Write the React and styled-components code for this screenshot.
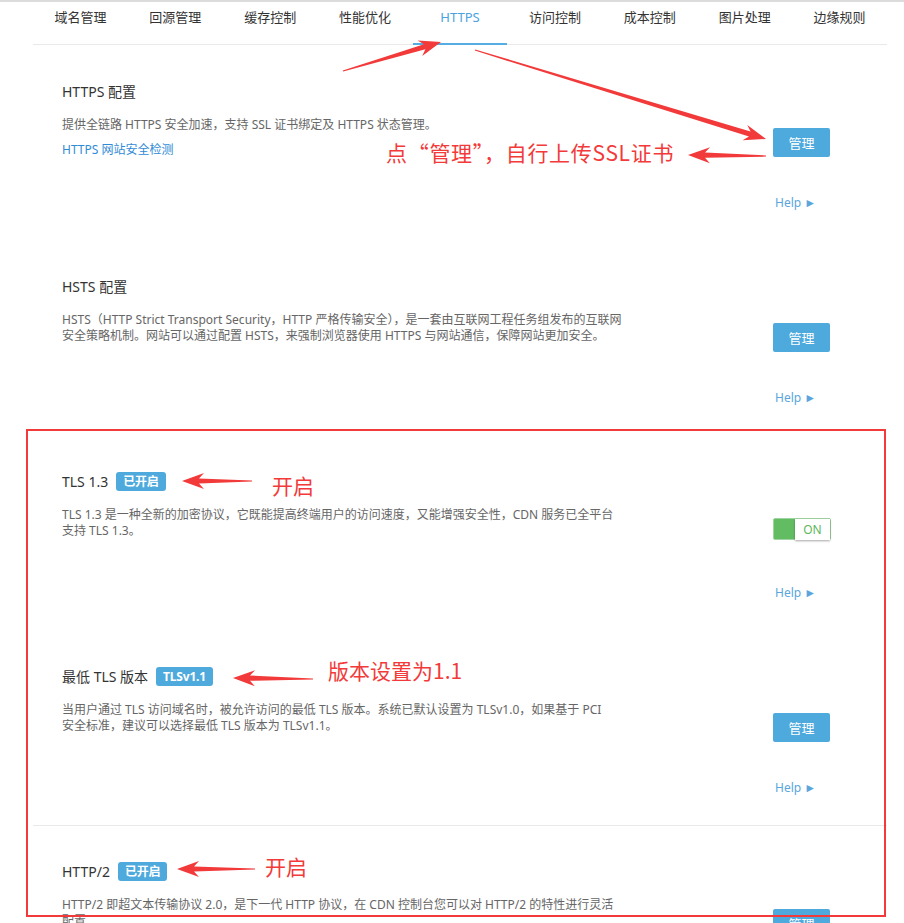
import React from 'react';
import styled, { createGlobalStyle } from 'styled-components';

const GlobalStyle = createGlobalStyle`
  html, body {
    margin: 0;
    padding: 0;
    background: #fff;
    overflow: hidden;
  }
  body {
    font-family: "Noto Sans", "Noto Sans CJK SC", sans-serif;
    color: #333;
  }
`;

const Screen = styled.div`
  position: relative;
  width: 904px;
  height: 923px;
  overflow: hidden;
  border-top: 2px solid #dcdcdc;
  box-sizing: border-box;
`;

const Page = styled.div`
  margin: 0 17px 0 33px;
`;

const Nav = styled.div`
  display: flex;
  height: 43px;
  box-sizing: border-box;
  border-bottom: 1px solid #e9e9e9;
`;

const Tab = styled.div`
  flex: 1;
  height: 43px;
  box-sizing: border-box;
  padding-top: 5px;
  margin-bottom: -1px;
  text-align: center;
  font-size: 13px;
  line-height: 20px;
  color: ${(p) => (p.$active ? '#4aa3df' : '#333')};
  border-bottom: 2px solid ${(p) => (p.$active ? '#56ade3' : 'transparent')};
`;

const Section = styled.div`
  display: flex;
  height: 195px;
  box-sizing: border-box;
  padding: 0 57px 0 29px;
  border-top: ${(p) => (p.$divided ? '1px solid #e9e9e9' : 'none')};
`;

const Info = styled.div`
  flex: 1;
  padding-top: ${(p) => (p.$divided ? '35px' : '36px')};
`;

const Title = styled.div`
  display: flex;
  align-items: center;
  gap: 8px;
  height: 20px;
  font-size: 14px;
  color: #333;
`;

const Badge = styled.span`
  display: inline-flex;
  align-items: center;
  height: 19px;
  padding: 0 7px;
  border-radius: 3px;
  background: #4ea9dc;
  color: #fff;
  font-size: 12px;
  font-weight: 700;
  letter-spacing: -0.2px;
`;

const Desc = styled.p`
  margin: 16px 0 0;
  font-size: 12px;
  line-height: 16px;
  color: #666;
`;

const DocLink = styled.a`
  display: block;
  margin-top: 9px;
  font-size: 12px;
  line-height: 16px;
  color: #2f8bd6;
  text-decoration: none;
`;

const Actions = styled.div`
  width: 57px;
  padding-top: 83px;
  display: flex;
  flex-direction: column;
`;

const ManageButton = styled.button`
  width: 57px;
  height: 29px;
  border: none;
  border-radius: 2px;
  background: #4ea9dc;
  color: #fff;
  font-family: "Noto Sans CJK SC", sans-serif;
  font-size: 13px;
  padding: 0;
`;

const Toggle = styled.div`
  display: flex;
  justify-content: flex-end;
  width: 58px;
  height: 22px;
  box-sizing: border-box;
  border: 1px solid #9fd39f;
  border-radius: 2px;
  background: #62bc62;
`;

const Knob = styled.span`
  width: 35px;
  height: 21px;
  background: #fff;
  box-shadow: 0 1px 2px rgba(0, 0, 0, 0.35);
  color: #5cb85c;
  font-size: 12px;
  line-height: 21px;
  text-align: center;
`;

const Help = styled.a`
  margin-top: ${(p) => (p.$toggle ? '45px' : '38px')};
  padding-left: 2px;
  font-size: 12px;
  line-height: 16px;
  color: #5aa6dc;
  text-decoration: none;
  white-space: nowrap;
`;

const Mark = styled.div`
  position: absolute;
  left: 26px;
  top: 427px;
  width: 860px;
  height: 488px;
  box-sizing: border-box;
  border: 2px solid #f23a3a;
  pointer-events: none;
`;

const Note = styled.div`
  position: absolute;
  left: ${(p) => p.$x}px;
  top: ${(p) => p.$y}px;
  font-family: "Noto Sans CJK SC", sans-serif;
  font-size: 21px;
  line-height: 26px;
  letter-spacing: ${(p) => p.$spacing || 0}px;
  color: #f23a3a;
  white-space: nowrap;
`;

const Overlay = styled.svg`
  position: absolute;
  left: 0;
  top: -2px;
  pointer-events: none;
`;

const tabs = ['域名管理', '回源管理', '缓存控制', '性能优化', 'HTTPS', '访问控制', '成本控制', '图片处理', '边缘规则'];

// tapered arrow: thin tail, wide neck, triangular head
function arrowPoints(x1, y1, x2, y2, head = 22, half = 8) {
  const len = Math.hypot(x2 - x1, y2 - y1);
  const dx = (x2 - x1) / len;
  const dy = (y2 - y1) / len;
  const px = -dy;
  const py = dx;
  const bx = x2 - dx * head;
  const by = y2 - dy * head;
  const nx = x2 - dx * (head - 5);
  const ny = y2 - dy * (head - 5);
  const pts = [
    [x1 + px * 0.6, y1 + py * 0.6],
    [nx + px * 2.6, ny + py * 2.6],
    [bx + px * half, by + py * half],
    [x2, y2],
    [bx - px * half, by - py * half],
    [nx - px * 2.6, ny - py * 2.6],
    [x1 - px * 0.6, y1 - py * 0.6],
  ];
  return pts.map(([x, y]) => `${x.toFixed(1)},${y.toFixed(1)}`).join(' ');
}

const arrows = [
  [343, 71, 441, 42],
  [475, 50, 766, 139],
  [766, 156, 688, 155],
  [252, 481, 182, 481],
  [313, 679, 233, 678],
  [255, 869, 177, 869],
];

const HelpLink = ({ toggle }) => (
  <Help $toggle={toggle}>Help ►</Help>
);

const App = () => (
  <Screen>
    <GlobalStyle />
    <Page>
      <Nav>
        {tabs.map((t) => (
          <Tab key={t} $active={t === 'HTTPS'}>{t}</Tab>
        ))}
      </Nav>

      <Section>
        <Info>
          <Title>HTTPS 配置</Title>
          <Desc>提供全链路 HTTPS 安全加速，支持 SSL 证书绑定及 HTTPS 状态管理。</Desc>
          <DocLink>HTTPS 网站安全检测</DocLink>
        </Info>
        <Actions>
          <ManageButton>管理</ManageButton>
          <HelpLink />
        </Actions>
      </Section>

      <Section>
        <Info>
          <Title>HSTS 配置</Title>
          <Desc>
            HSTS（HTTP Strict Transport Security，HTTP 严格传输安全），是一套由互联网工程任务组发布的互联网<br />
            安全策略机制。网站可以通过配置 HSTS，来强制浏览器使用 HTTPS 与网站通信，保障网站更加安全。
          </Desc>
        </Info>
        <Actions>
          <ManageButton>管理</ManageButton>
          <HelpLink />
        </Actions>
      </Section>

      <Section>
        <Info>
          <Title>TLS 1.3 <Badge>已开启</Badge></Title>
          <Desc>
            TLS 1.3 是一种全新的加密协议，它既能提高终端用户的访问速度，又能增强安全性，CDN 服务已全平台<br />
            支持 TLS 1.3。
          </Desc>
        </Info>
        <Actions>
          <Toggle><Knob>ON</Knob></Toggle>
          <HelpLink toggle />
        </Actions>
      </Section>

      <Section>
        <Info>
          <Title>最低 TLS 版本 <Badge>TLSv1.1</Badge></Title>
          <Desc>
            当用户通过 TLS 访问域名时，被允许访问的最低 TLS 版本。系统已默认设置为 TLSv1.0，如果基于 PCI<br />
            安全标准，建议可以选择最低 TLS 版本为 TLSv1.1。
          </Desc>
        </Info>
        <Actions>
          <ManageButton>管理</ManageButton>
          <HelpLink />
        </Actions>
      </Section>

      <Section $divided>
        <Info $divided>
          <Title>HTTP/2 <Badge>已开启</Badge></Title>
          <Desc>
            HTTP/2 即超文本传输协议 2.0，是下一代 HTTP 协议，在 CDN 控制台您可以对 HTTP/2 的特性进行灵活<br />
            配置
          </Desc>
        </Info>
        <Actions>
          <ManageButton>管理</ManageButton>
          <HelpLink />
        </Actions>
      </Section>
    </Page>

    <Mark />
    <Overlay width="904" height="923" viewBox="0 0 904 923">
      {arrows.map((a, i) => (
        <polygon key={i} points={arrowPoints(...a)} fill="#f23a3a" />
      ))}
    </Overlay>
    <Note $x={386} $y={137} $spacing={0.7}>点“管理”，自行上传SSL证书</Note>
    <Note $x={272} $y={470}>开启</Note>
    <Note $x={328} $y={655}>版本设置为1.1</Note>
    <Note $x={265} $y={851}>开启</Note>
  </Screen>
);

export default App;
